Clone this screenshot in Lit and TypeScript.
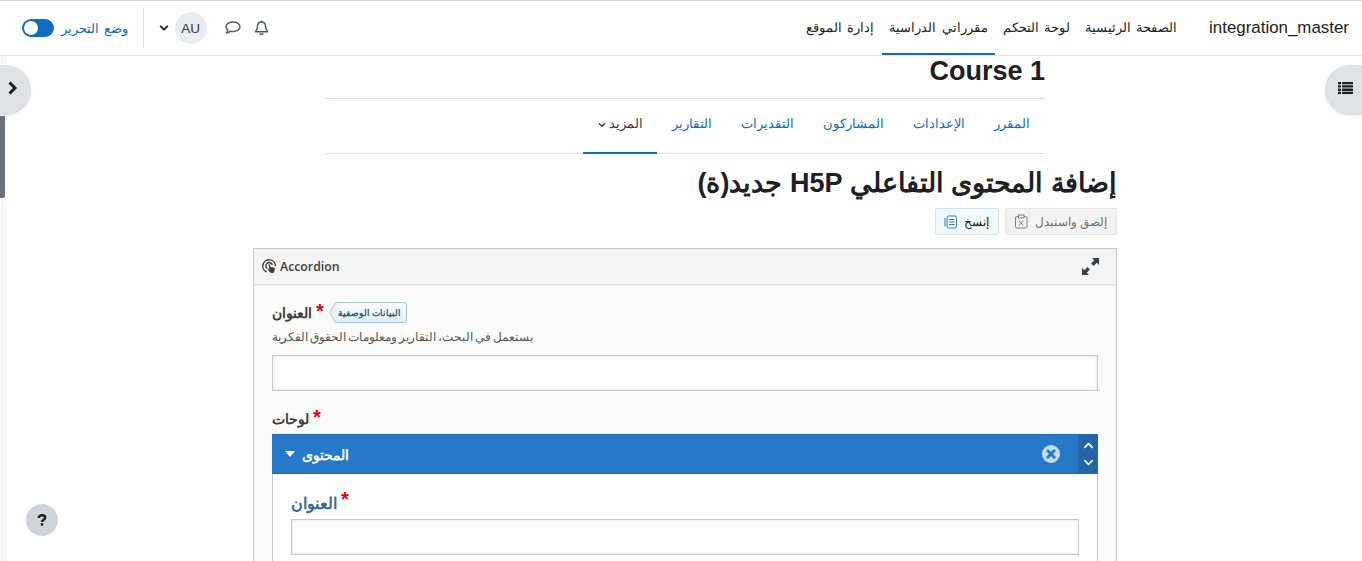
import { LitElement, html, css, svg } from "lit";
import { customElement } from "lit/decorators.js";

@customElement("app-root")
export class AppRoot extends LitElement {
  static styles = css`
    :host { display: block; height: 561px; overflow: hidden; position: relative; background: #fff; font-family: "Liberation Sans", sans-serif; color: #1d2125; direction: rtl; font-size: 13.4px; }
    * { box-sizing: border-box; }
    .nav { height: 56px; border-top: 1px solid #d5d5d5; border-bottom: 1px solid #e3e4e6; display: flex; align-items: stretch; padding: 0 13px 0 12px; background: #fff; word-spacing: 1.5px; }
    .brand { font-size: 16.9px; direction: ltr; align-self: center; margin-left: 24.5px; margin-top: 0; color: #1d2125; }
    .menu { display: flex; align-items: stretch; }
    .menu a { padding: 0 7.5px; display: flex; align-items: center; color: #1d2125; height: 54px; border-bottom: 2px solid transparent; }
    .menu a.active { border-bottom-color: #0f6cbf; }
    .spacer { flex: 1; }
    .tools { display: flex; align-items: center; padding-left: 10px; }
    .tool { display: flex; color: #505a62; }
    .bell { margin-left: 13px; }
    .cmt { margin-left: 18px; }
    .avatar { width: 32px; height: 32px; border-radius: 50%; background: #e9ecef; font-size: 13.5px; color: #343a40; display: flex; align-items: center; justify-content: center; direction: ltr; margin-left: 6px; }
    .caret { display: flex; margin-left: 14.5px; color: #1d2125; }
    .edit { height: 40px; border-right: 1px solid #e3e4e6; padding-right: 15px; display: flex; align-items: center; gap: 7px; color: #0f6cbf; }
    .toggle { width: 32px; height: 18px; border-radius: 9px; background: #0f6cbf; position: relative; }
    .toggle i { position: absolute; left: 2px; top: 2px; width: 14px; height: 14px; border-radius: 50%; background: #fff; }

    .main { margin-left: 8px; display: flex; flex-direction: column; align-items: center; }
    .course { width: 720px; }
    .course h1 { margin: 0; font-size: 27px; font-weight: 700; line-height: 28px; height: 43px; padding-top: 1px; color: #1d2125; direction: ltr; text-align: right; border-bottom: 1px solid #dee2e6; }
    .tabs { display: flex; height: 55px; border-bottom: 1px solid #dee2e6; }
    .tabs a { padding: 0 14.6px 6px; display: flex; align-items: center; color: #0f6cbf; height: 55px; }
    .tabs a.more { color: #343a40; border-bottom: 2px solid #0f6cbf; padding: 0 14.5px 4px; gap: 3px; }
    .tabs a.more svg { margin-top: 3px; }
    .content { width: 864px; }
    .content h2 { margin: 9px 0 0; font-size: 27px; font-weight: 700; line-height: 40px; height: 42px; color: #1d2125; }
    .btns { display: flex; gap: 6px; margin-top: 3px; height: 27px; }
    .btn { display: flex; align-items: center; gap: 7px; height: 27px; border: 1px solid #dfe3e7; border-radius: 2px; padding: 0 9px; font-size: 11.9px; }
    .btn.paste { background: #f3f3f3; color: #6e6e6e; border-color: #e6e6e6; }
    .btn.copy { background: #f2f9fd; color: #111; border-color: #d5e6f0; padding: 0 9px 0 8px; }

    .box { direction: ltr; margin-top: 13px; border: 1px solid #c9c9c9; background: #fbfbfb; font-family: "Open Sans", sans-serif; height: 330px; overflow: hidden; }
    .head { height: 36px; background: #f4f4f4; border-bottom: 1px solid #dcdcdc; box-shadow: 0 1px 2px #e6e6e6; display: flex; align-items: center; justify-content: space-between; padding: 0 17px 0 8px; }
    .head .ttl { display: flex; align-items: center; gap: 3px; font-size: 12.3px; font-weight: 600; color: #404040; }
    .body { padding: 15px 18px 0; }
    .lab { display: flex; align-items: center; height: 24px; font-size: 14.4px; font-weight: 700; color: #3e3e3e; }
    .lab b { color: #e3000b; font-size: 20px; line-height: 1; margin-left: 4px; margin-top: -3px; font-family: "Liberation Sans", sans-serif; }
    .meta { margin-left: 5px; display: flex; height: 21px; align-items: center; }
    .meta span { height: 21px; border: 1px solid #a6c6dd; border-left: 0; border-radius: 0 3px 3px 0; background: linear-gradient(#fbfdff, #dfeefa); color: #2e5a80; font-size: 9px; font-weight: 700; display: flex; align-items: center; padding: 0 5px 0 0; }
    .meta svg { display: block; }
    .desc { margin-top: 5px; font-size: 12px; word-spacing: -1.2px; color: #555; line-height: 16px; height: 17px; }
    .inp { display: block; height: 36px; border: 1px solid #c8c8c8; background: #fff; box-shadow: inset 0 0 3px #e2e2e2; }
    .body > .inp { margin-top: 9px; }
    .lab2 { margin-top: 15px; margin-bottom: 4px; }
    .panel { border: 1px solid #c9c9c9; border-top: 0; background: #fff; height: 200px; padding: 14px 18px 0; }
    .bar { height: 40px; background: #2779c7; border-top: 1px solid #1f68ae; border-bottom: 1px solid #1f68ae; display: flex; align-items: center; color: #fff; font-size: 14.2px; font-weight: 700; }
    .arrows { width: 20px; height: 38px; background: #2365a8; display: flex; flex-direction: column; align-items: center; justify-content: space-around; padding: 2px 0; }
    .x { margin-right: 18px; display: flex; }
    .t { flex: 1; display: flex; align-items: center; gap: 7px; padding-left: 13px; }
    .sub { color: #376a96; height: 26px; padding-top: 3px; display: flex; align-items: center; font-size: 15.7px; font-weight: 700; }
    .sub b { color: #e3000b; font-size: 20px; line-height: 1; margin-left: 4px; margin-top: -7px; font-family: "Liberation Sans", sans-serif; }
    .panel .inp { margin-top: 5px; }

    .strip { position: absolute; left: 0; top: 56px; width: 7px; height: 505px; background: #f8f9fa; }
    .thumb { position: absolute; left: 0; top: 116px; width: 5px; height: 82px; background: #6a737b; border-radius: 0 0 2px 0; }
    .fab { position: absolute; direction: ltr; background: #dee2e6; display: flex; align-items: center; padding-bottom: 4px; }
    .fab.l { left: 0; top: 65px; width: 31px; height: 50px; border-radius: 0 25px 25px 0; padding-left: 7px; box-shadow: 0 1px 3px rgba(0,0,0,.08); }
    .fab.r { right: 0; top: 65px; width: 37px; height: 50px; border-radius: 25px 0 0 25px; padding-left: 13px; box-shadow: 0 1px 3px rgba(0,0,0,.08); }
    .help { position: absolute; left: 26px; top: 504px; width: 32px; height: 32px; border-radius: 50%; background: #ced4da; color: #1d2125; display: flex; align-items: center; justify-content: center; }
  `;

  chevron(dir: string, size = 10, color = "currentColor", w = 2) {
    const d = dir === "down" ? "M2 4l4 4 4-4" : dir === "up" ? "M2 8l4-4 4 4" : "M4 2l4 4-4 4";
    return svg`<svg width=${size} height=${size} viewBox="0 0 12 12" fill="none" stroke=${color} stroke-width=${w} stroke-linecap="round" stroke-linejoin="round"><path d=${d}/></svg>`;
  }

  render() {
    return html`
      <div class="nav">
        <div class="brand">integration_master</div>
        <div class="menu">
          <a>الصفحة الرئيسية</a>
          <a>لوحة التحكم</a>
          <a class="active">مقرراتي الدراسية</a>
          <a>إدارة الموقع</a>
        </div>
        <div class="spacer"></div>
        <div class="tools">
          <span class="tool bell"><svg width="15" height="16" viewBox="0 0 15 16" fill="none" stroke="currentColor" stroke-width="1.4" stroke-linejoin="round"><path d="M7.500 2c-2.600 0-4 1.900-4 4.200 0 3.300-1.500 4.300-2 5.500h12c-.5-1.200-2-2.200-2-5.500C11.500 3.900 10.100 2 7.500 2z"/><path d="M5.800 13.300a1.800 1.800 0 003.400 0"/><path d="M7.500.6V2"/></svg></span>
          <span class="tool cmt"><svg width="16" height="14" viewBox="0 0 16 14" fill="none" stroke="currentColor" stroke-width="1.400" stroke-linejoin="round"><path d="M8 1C4.200 1 1 3 1 5.700c0 1.300.7 2.400 1.900 3.200-.2 1-.9 2.300-1.500 3.100 1.600-.1 3-.9 3.900-1.800.8.200 1.700.3 2.700.3 3.800 0 7-2 7-4.800S11.800 1 8 1z"/></svg></span>
          <span class="avatar">AU</span>
          <span class="caret">${this.chevron("down", 10, "currentColor", 2.2)}</span>
          <div class="edit">
            <span>وضع التحرير</span>
            <span class="toggle"><i></i></span>
          </div>
        </div>
      </div>

      <div class="main">
        <div class="course">
          <h1>Course 1</h1>
          <div class="tabs">
            <a>المقرر</a>
            <a>الإعدادات</a>
            <a>المشاركون</a>
            <a>التقديرات</a>
            <a>التقارير</a>
            <a class="more">المزيد ${this.chevron("down", 8, "currentColor", 2)}</a>
          </div>
        </div>
        <div class="content">
          <h2>إضافة المحتوى التفاعلي H5P جديد(ة)</h2>
          <div class="btns">
            <div class="btn paste">إلصق واستبدل
              <svg width="13" height="15" viewBox="0 0 13 15" fill="none" stroke="#7d7d7d" stroke-width="1"><rect x=".5" y="2.500" width="11.500" height="11.500" rx="1.500"/><rect x="3.500" y="1" width="5.500" height="3" fill="#f3f3f3"/><path d="M4 7l4.500 4.500M8.500 7L4 11.500"/></svg>
            </div>
            <div class="btn copy">إنسخ
              <svg width="13" height="15" viewBox="0 0 13 15" fill="none" stroke="#3a7ab8" stroke-width="1"><rect x="3" y="2" width="9.500" height="12" rx="1.500"/><path d="M1 4v8.500M5 5.500h5.500M5 8h5.500M5 10.500h5.500"/></svg>
            </div>
          </div>
          <div class="box">
            <div class="head">
              <span class="ttl">
                <svg width="15" height="15" viewBox="0 0 15 15" fill="none" stroke="#3a3a3a" stroke-width="1.400"><path d="M4.500 12.800A6.300 6.300 0 1 1 13.400 7"/><path d="M5.400 9.700A3.300 3.300 0 1 1 10.300 6"/><path d="M6.500 5.500c.9-.4 1.300.1 1.500.8l.6 1.800 2.900.4c1 .2 1.500.9 1.300 1.800l-.6 2.500c-.2.700-.7 1.200-1.400 1.200H9.200L6.800 12 5.500 9.800l1.800.6z" fill="#3a3a3a" stroke="none"/></svg>
                Accordion
              </span>
              <svg width="17" height="17" viewBox="0 0 17 17" fill="#33414f"><path d="M10 0h7v7l-2.300-2.300-3.200 3.200-2.400-2.400 3.200-3.200zM7 17H0v-7l2.300 2.300 3.200-3.200 2.400 2.400-3.200 3.200z"/></svg>
            </div>
            <div class="body">
              <div class="lab">العنوان<b>*</b>
                <span class="meta"><svg width="9" height="21" viewBox="0 0 9 21"><path d="M9 .5H6.500L.6 10.500l5.900 10H9" fill="#eaf3fb" stroke="#a6c6dd"/></svg><span>البيانات الوصفية</span></span>
              </div>
              <div class="desc">يستعمل في البحث، التقارير ومعلومات الحقوق الفكرية</div>
              <div class="inp"></div>
              <div class="lab lab2">لوحات<b>*</b></div>
              <div class="bar">
                <span class="t"><svg width="10" height="6" viewBox="0 0 10 6"><path d="M0 0h10L5 6z" fill="#fff"/></svg><span>المحتوى</span></span>
                <span class="x"><svg width="18" height="18" viewBox="0 0 18 18"><circle cx="9" cy="9" r="9" fill="#c3dcf2"/><path d="M5.800 5.800l6.400 6.400M12.200 5.800l-6.400 6.400" stroke="#2779c7" stroke-width="3" stroke-linecap="round"/></svg></span>
                <span class="arrows">${this.chevron("up", 11, "#fff", 1.8)}${this.chevron("down", 11, "#fff", 1.8)}</span>
              </div>
              <div class="panel">
                <div class="sub">العنوان<b>*</b></div>
                <div class="inp"></div>
              </div>
            </div>
          </div>
        </div>
      </div>

      <div class="strip"></div>
      <div class="thumb"></div>
      <div class="fab l"><svg width="11" height="14" viewBox="0 0 11 14" fill="none" stroke="#1d2125" stroke-width="3"><path d="M2.500 1.500L8 7l-5.500 5.500"/></svg></div>
      <div class="fab r"><svg width="15" height="12" viewBox="0 0 15 12" fill="#1d2125"><path d="M0 0h3v2.300H0zM4 0h11v2.300H4zM0 3.300h3v2.300H0zM4 3.300h11v2.300H4zM0 6.600h3v2.300H0zM4 6.600h11v2.300H4zM0 9.700h3V12H0zM4 9.700h11V12H4z"/></svg></div>
      <div class="help"><svg width="10" height="12" viewBox="0 0 10 12" fill="none" stroke="#1d2125" stroke-width="2.400"><path d="M1.800 4c0-1.700 1.300-2.700 3.200-2.700S8.200 2.300 8.200 3.800C8.200 5.800 5 5.800 5 8"/><path d="M5 9.200v2.500"/></svg></div>
    `;
  }
}
